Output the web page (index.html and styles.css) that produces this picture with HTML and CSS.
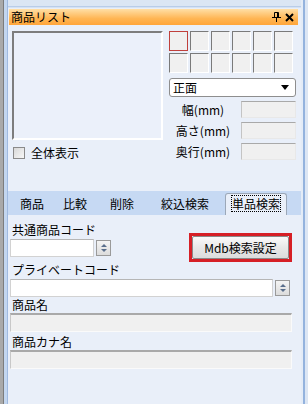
FILE: index.html
```html
<!DOCTYPE html>
<html lang="ja">
<head>
    <meta charset="UTF-8">
    <title>商品リスト</title>
    <link rel="stylesheet" href="styles.css">
</head>
<body>
    <div class="frame">
        <div class="edge-left"></div>
        <div class="panel">
            <div class="titlebar">
                <span class="title">商品リスト</span>
                <span class="title-icons">
                    <svg width="9" height="10" viewBox="0 0 9 10"><path d="M2.5 0.5h4v5h-4z M0 5.5h9 M4.5 5.5v4.5" fill="none" stroke="#000" stroke-width="1"/><path d="M5.5 1v4" stroke="#000" stroke-width="1"/></svg>
                    <svg width="9" height="9" viewBox="0 0 9 9"><path d="M1 1l7 7M8 1l-7 7" stroke="#000" stroke-width="2"/></svg>
                </span>
            </div>

            <div class="top">
                <div class="left-col">
                    <div class="preview"></div>
                    <label class="check-row"><span class="checkbox"></span>全体表示</label>
                </div>
                <div class="right-col">
                    <div class="views">
                        <div class="cell active"></div>
                        <div class="cell"></div>
                        <div class="cell"></div>
                        <div class="cell"></div>
                        <div class="cell"></div>
                        <div class="cell"></div>
                        <div class="cell"></div>
                        <div class="cell"></div>
                        <div class="cell"></div>
                        <div class="cell"></div>
                        <div class="cell"></div>
                        <div class="cell"></div>
                    </div>
                    <div class="select">
                        <span>正面</span>
                        <svg width="8" height="5" viewBox="0 0 8 5"><path d="M0 0h8l-4 5z" fill="#000"/></svg>
                    </div>
                    <div class="dim"><span class="dim-label">幅(mm)</span><span class="dim-box"></span></div>
                    <div class="dim"><span class="dim-label">高さ(mm)</span><span class="dim-box"></span></div>
                    <div class="dim"><span class="dim-label">奥行(mm)</span><span class="dim-box"></span></div>
                </div>
            </div>

            <div class="tabs">
                <span class="tab">商品</span>
                <span class="tab">比較</span>
                <span class="tab">削除</span>
                <span class="tab">絞込検索</span>
                <span class="tab selected"><span class="focus">単品検索</span></span>
            </div>

            <div class="form">
                <div class="row-code">
                    <div class="code-left">
                        <div class="label">共通商品コード</div>
                        <div class="field-row">
                            <span class="textbox short"></span>
                            <span class="spinner"><i class="up"></i><i class="down"></i></span>
                        </div>
                    </div>
                    <div class="mdb-wrap"><button class="mdb">Mdb検索設定</button></div>
                </div>
                <div class="label">プライベートコード</div>
                <div class="field-row">
                    <span class="textbox long"></span>
                    <span class="spinner"><i class="up"></i><i class="down"></i></span>
                </div>
                <div class="label">商品名</div>
                <span class="textbox disabled"></span>
                <div class="label">商品カナ名</div>
                <span class="textbox disabled"></span>
            </div>
        </div>
        <div class="edge-right"></div>
    </div>
</body>
</html>
```

FILE: styles.css
```css
body {
    margin: 0;
    width: 308px;
    height: 404px;
    overflow: hidden;
    font-family: "Noto Sans CJK JP", sans-serif;
    font-size: 12px;
    color: #000;
    background: #d5e2f3;
}

.frame {
    display: flex;
    height: 396px;
    padding-top: 8px;
    background: linear-gradient(#dbe6f4 0 6px, #b9cde9 6px 7px, #d5e2f3 7px);
}

.edge-left {
    width: 8px;
    margin-top: -8px;
    background: linear-gradient(to right, #a9a9a9 0 3px, #7c7c7c 3px 4px, #c3d6ef 4px 7px, #9fb9df 7px 8px);
}

.edge-right {
    width: 7px;
    margin-top: -8px;
    background: linear-gradient(to right, #e4ecf7 0 2px, #94b3de 2px 4px, #dce6f4 4px);
}

.panel {
    width: 293px;
    background: #e9eff9;
    display: flex;
    flex-direction: column;
}

.titlebar {
    height: 16px;
    margin: 1px 3px 0 1px;
    padding: 0 4px 0 2px;
    display: flex;
    align-items: center;
    justify-content: space-between;
    background: linear-gradient(#ffdfa6, #ffb553 60%, #ffa53a);
    line-height: 16px;
}

.title-icons {
    display: flex;
    gap: 4px;
    align-items: center;
}

.top {
    display: flex;
    padding: 6px 0 0 4px;
}

.preview {
    width: 147px;
    height: 105px;
    border-top: 2px solid #7d7d7d;
    border-left: 2px solid #7d7d7d;
    border-right: 2px solid #fff;
    border-bottom: 2px solid #fff;
    background: #ebf0fa;
}

.check-row {
    display: flex;
    align-items: center;
    gap: 6px;
    margin: 7px 0 0 1px;
    height: 12px;
    line-height: 12px;
}

.checkbox {
    width: 10px;
    height: 10px;
    border: 1px solid #8a8a8a;
    background: linear-gradient(135deg, #d8d8d8, #f7f7f7);
}

.right-col {
    margin-left: 6px;
    width: 127px;
}

.views {
    display: grid;
    grid-template-columns: repeat(6, 19px);
    grid-auto-rows: 20px;
    gap: 2px;
}

.cell {
    background: #f0f0f0;
    border-top: 1px solid #7a7a7a;
    border-left: 1px solid #7a7a7a;
    border-right: 1px solid #fff;
    border-bottom: 1px solid #fff;
}

.cell.active {
    border: 1px solid #c0403c;
}

.select {
    margin-top: 5px;
    height: 17px;
    border: 1px solid #8e8e8e;
    border-radius: 3px;
    background: #fff;
    display: flex;
    align-items: center;
    justify-content: space-between;
    padding: 0 6px 0 3px;
    line-height: 17px;
}

.dim {
    display: flex;
    align-items: center;
    margin-top: 4px;
    height: 17px;
}

.dim-label {
    width: 68px;
    text-align: center;
}

.dim-box {
    margin-left: 4px;
    width: 53px;
    height: 15px;
    background: #f0f0f0;
    border: 1px solid #c4c4c4;
    border-top-color: #a9a9a9;
    border-right-color: #e8e8e8;
    border-bottom-color: #e8e8e8;
}

.tabs {
    margin-top: 31px;
    height: 24px;
    background: #c6d9f3;
    display: flex;
    align-items: flex-end;
    padding-left: 12px;
}

.tab {
    height: 22px;
    line-height: 22px;
}

.tab:nth-child(1) {
    margin-right: 19px;
}

.tab:nth-child(2) {
    margin-right: 23px;
}

.tab:nth-child(3) {
    margin-right: 27px;
}

.tab:nth-child(4) {
    margin-right: 16px;
}

.tab.selected {
    padding: 0 5px;
    background: #e9eff9;
    border: 1px solid #9ca8b8;
    border-bottom: 0;
    border-radius: 3px 3px 0 0;
    height: 21px;
    line-height: 19px;
}

.focus {
    outline: 1px dotted #000;
    outline-offset: -1px;
    padding: 0 1px;
}

.form {
    padding: 7px 9px 0 2px;
    display: flex;
    flex-direction: column;
}

.label {
    height: 16px;
    line-height: 16px;
    padding-left: 2px;
}

.row-code {
    display: flex;
    justify-content: space-between;
}

.field-row {
    display: flex;
    align-items: center;
    gap: 2px;
    height: 19px;
}

.textbox {
    display: block;
    height: 16px;
    background: #fff;
    border: 1px solid #d2d2d2;
    border-top-color: #b6b6b6;
}

.textbox.short {
    width: 82px;
}

.textbox.long {
    width: 261px;
}

.textbox.disabled {
    height: 16px;
    background: #f0f0f0;
    border: 1px solid #c8c8c8;
    border-top: 2px solid #a9a9a9;
    border-right-color: #fafafa;
    border-bottom-color: #fafafa;
    margin-bottom: 2px;
}

.spinner {
    width: 13px;
    height: 14px;
    border: 1px solid #9a9a9a;
    background: linear-gradient(#f4f4f4, #dcdcdc);
    display: flex;
    flex-direction: column;
    align-items: center;
    justify-content: center;
    gap: 2px;
}

.spinner i {
    width: 0;
    height: 0;
    border-left: 3px solid transparent;
    border-right: 3px solid transparent;
}

.spinner .up {
    border-bottom: 3px solid #5a6f8c;
}

.spinner .down {
    border-top: 3px solid #5a6f8c;
}

.mdb-wrap {
    margin-top: 11px;
    border: 3px solid #d61f26;
    height: 23px;
    width: 97px;
}

.mdb {
    width: 97px;
    height: 23px;
    margin: 0;
    padding: 0;
    font-family: inherit;
    font-size: 12px;
    border: 1px solid #8a8a8a;
    border-radius: 2px;
    background: linear-gradient(#fafafa, #e8e8e8 50%, #dcdcdc);
    color: #000;
}
```
